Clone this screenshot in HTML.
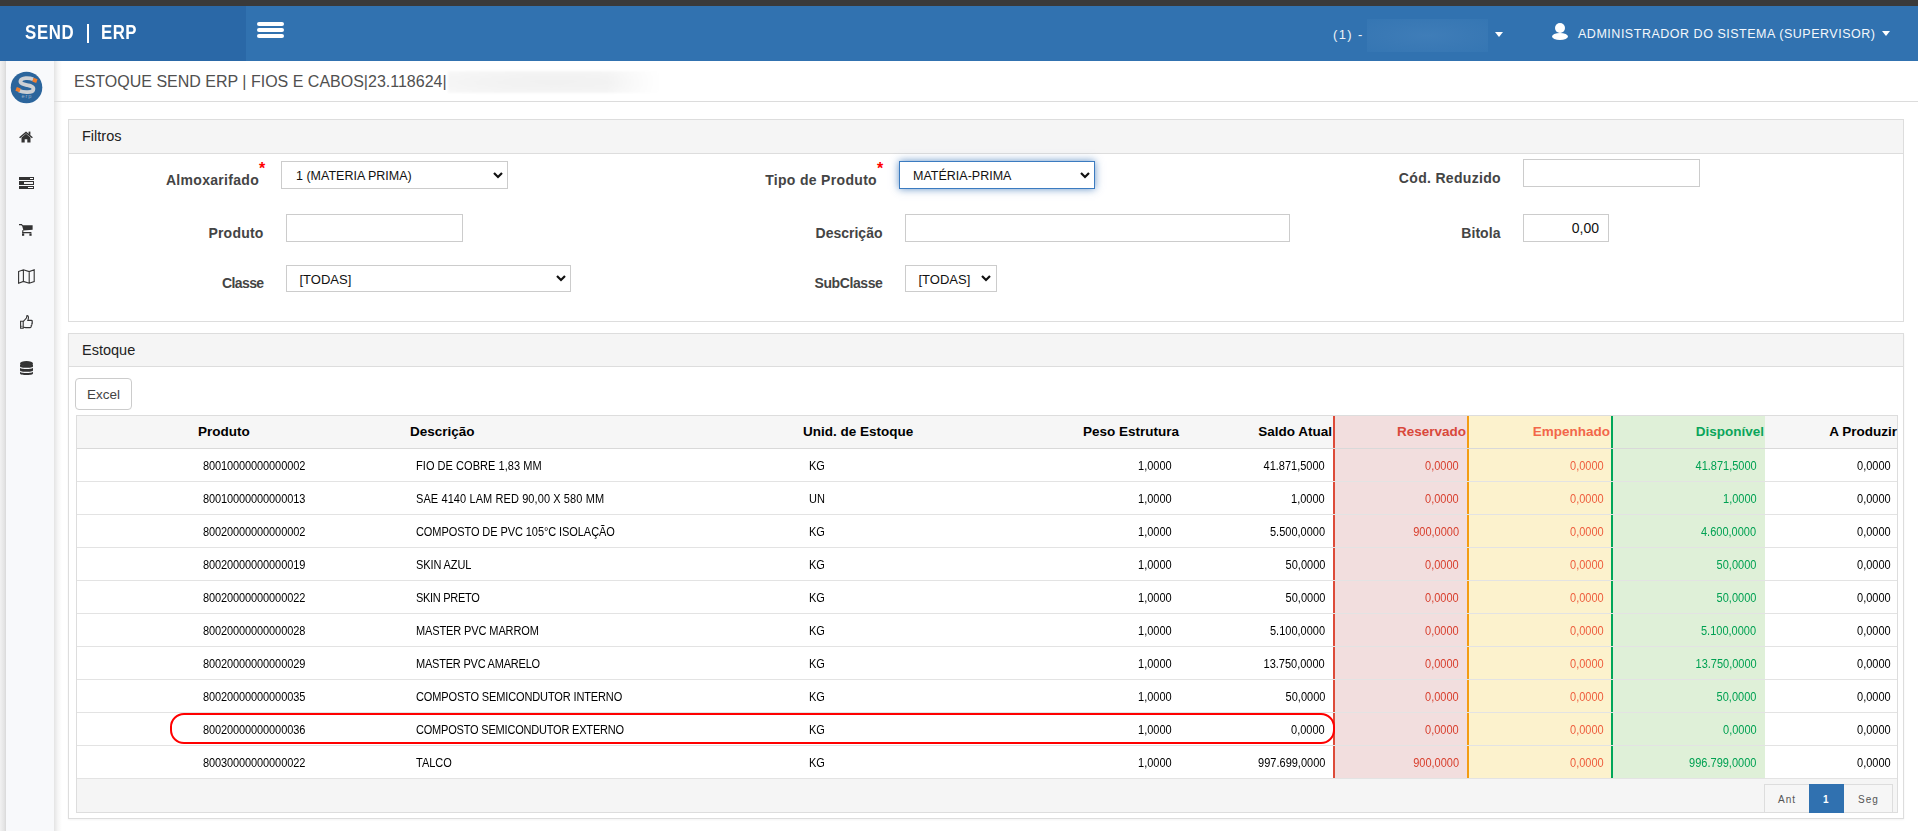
<!DOCTYPE html>
<html><head><meta charset="utf-8"><title>Estoque</title><style>
*{box-sizing:border-box;margin:0;padding:0}
html,body{width:1918px;height:831px;overflow:hidden;background:#fff;font-family:"Liberation Sans",sans-serif}
body{position:relative}
.a{position:absolute}
.t{position:absolute;white-space:nowrap;line-height:1}
svg{position:absolute;overflow:visible}
</style></head><body>
<div class="a" style="left:0px;top:0px;width:1918px;height:6px;background:#3a3a3a"></div>
<div class="a" style="left:0px;top:6px;width:1918px;height:55px;background:#3172b0"></div>
<div class="a" style="left:0px;top:6px;width:246px;height:55px;background:#2a68a7"></div>
<div class="t" style="left:25px;top:21.87px;font-size:20px;font-weight:bold;color:#fff;letter-spacing:0.8px;transform:scaleX(0.84);transform-origin:0 0">SEND</div>
<div class="a" style="left:87px;top:24px;width:2px;height:19px;background:#fff"></div>
<div class="t" style="left:101px;top:21.87px;font-size:20px;font-weight:bold;color:#fff;letter-spacing:0.6px;transform:scaleX(0.84);transform-origin:0 0">ERP</div>
<div class="a" style="left:257px;top:22px;width:27px;height:4px;background:#fff;border-radius:2px"></div>
<div class="a" style="left:257px;top:28px;width:27px;height:4px;background:#fff;border-radius:2px"></div>
<div class="a" style="left:257px;top:34px;width:27px;height:4px;background:#fff;border-radius:2px"></div>
<div class="t" style="left:1333px;top:27.60px;font-size:13px;font-weight:normal;color:#eef3f8;letter-spacing:1.4px;">(1) -</div>
<div class="a" style="left:1367px;top:19px;width:121px;height:33px;background:radial-gradient(ellipse at center,#3f7db8 0%,#3a79b5 50%,#3576b3 100%)"></div>
<svg style="left:1495px;top:32px" width="9" height="6"><path d="M0 0 L8 0 L4 5 Z" fill="#fff"/></svg>
<svg style="left:1552px;top:23px" width="17" height="17" viewBox="0 0 17 17"><circle cx="8" cy="5" r="5" fill="#fff"/><ellipse cx="8" cy="13.5" rx="8" ry="3.5" fill="#fff"/></svg>
<div class="t" style="left:1578px;top:28.02px;font-size:12.5px;font-weight:normal;color:#f4f8fc;letter-spacing:0.52px;">ADMINISTRADOR DO SISTEMA (SUPERVISOR)</div>
<svg style="left:1882px;top:31px" width="9" height="6"><path d="M0 0 L8 0 L4 5 Z" fill="#fff"/></svg>
<div class="a" style="left:0px;top:61px;width:6px;height:770px;background:linear-gradient(to right,#f2f2f2,#e4e4e4 70%,#d9d9d9)"></div>
<div class="a" style="left:6px;top:61px;width:48px;height:770px;background:#f8f9fb"></div>
<div class="a" style="left:54px;top:61px;width:8px;height:770px;background:linear-gradient(to right,#e4e4e4,#f6f6f6 50%,#fff)"></div>
<svg style="left:10px;top:71px" width="33" height="33" viewBox="0 0 33 33">
<circle cx="16.5" cy="16.5" r="15.8" fill="#2b659c"/>
<path d="M23.2 8.2 C19 6.6 11.6 6.6 10.6 9.6 C9.6 12.6 14 13.4 17.4 14.2 C21.4 15 24.2 16 23.2 19 C22.2 21.6 14 22 9 19.6" fill="none" stroke="#cdd0d4" stroke-width="3.8" stroke-linecap="butt"/>
<rect x="22.8" y="7.3" width="4.2" height="4" fill="#f07f2f" transform="rotate(20 24.9 9.3)"/>
<rect x="6" y="16.6" width="4.2" height="4" fill="#f07f2f" transform="rotate(20 8.1 18.6)"/>
<text x="17" y="27" font-size="5.6" letter-spacing="0.9" fill="#9db3c8" text-anchor="middle" font-family="Liberation Sans">erp</text>
</svg>
<svg style="left:19px;top:131px" width="14" height="12" viewBox="0 0 14 12">
<path d="M2.5 6.5 L7 2.8 L11.5 6.5 V11.5 H8.3 V8.3 H5.7 V11.5 H2.5 Z" fill="#333"/>
<path d="M0.6 6.8 L7 1.5 L13.4 6.8" fill="none" stroke="#333" stroke-width="1.4"/>
<rect x="9.6" y="0.6" width="1.8" height="3.2" fill="#333"/>
</svg>
<svg style="left:19px;top:177px" width="15" height="12" viewBox="0 0 15 12">
<rect x="0" y="0" width="15" height="3" fill="#333"/><rect x="11" y="1" width="3" height="1" fill="#fff"/>
<rect x="0" y="4" width="15" height="4" fill="#333"/><rect x="5" y="5" width="9" height="2" fill="#f4f4f4"/>
<rect x="0" y="9" width="15" height="3" fill="#333"/><rect x="9" y="10" width="5" height="1" fill="#fff"/>
</svg>
<svg style="left:19px;top:224px" width="14" height="12" viewBox="0 0 14 12">
<path d="M0 0.6 H2.6 L3.6 2 " fill="none" stroke="#333" stroke-width="1.1"/>
<path d="M3 1.2 H13.6 V5.8 L4.4 6.6 Z" fill="#333"/>
<path d="M4 6 L3.6 8.6 H12.4" fill="none" stroke="#333" stroke-width="1.1"/>
<rect x="3" y="9.4" width="2.2" height="2.4" fill="#333"/><rect x="10.4" y="9.4" width="2.2" height="2.4" fill="#333"/>
</svg>
<svg style="left:18px;top:269px" width="17" height="15" viewBox="0 0 17 15">
<path d="M0.6 2.4 L5.4 0.8 L11.2 2.6 L16.2 0.8 V12.6 L11.2 14.2 L5.4 12.4 L0.6 14.2 Z M5.4 0.8 V12.4 M11.2 2.6 V14.2" fill="none" stroke="#333" stroke-width="1.1" stroke-linejoin="miter"/>
</svg>
<svg style="left:20px;top:315px" width="13" height="14" viewBox="0 0 13 14">
<path d="M0.6 6.2 H3.2 V13.2 H0.6 Z" fill="none" stroke="#333" stroke-width="1.1"/>
<path d="M3.2 6.6 L6.4 3 L7 0.6 C8.4 0.6 8.8 2 8.2 4.2 L7.8 5.4 H11.4 C12.4 5.4 12.6 6.4 12 7 C12.6 7.6 12.4 8.6 11.8 8.8 C12.2 9.6 11.8 10.4 11.2 10.6 C11.4 11.6 11 12.6 10 12.6 H5.8 L3.2 12.2" fill="none" stroke="#333" stroke-width="1.1"/>
<rect x="1.4" y="10.8" width="1" height="1" fill="#333"/>
</svg>
<svg style="left:20px;top:361px" width="13" height="15" viewBox="0 0 13 15">
<ellipse cx="6.5" cy="2.6" rx="6.5" ry="2.6" fill="#333"/>
<path d="M0 3 V5.4 C0 7.2 13 7.2 13 5.4 V3 C13 4.8 0 4.8 0 3 Z" fill="#333"/>
<path d="M0 6.6 V9.4 C0 11.2 13 11.2 13 9.4 V6.6 C13 8.6 0 8.6 0 6.6 Z" fill="#333"/>
<path d="M0 10.6 V12.6 C0 14.6 13 14.6 13 12.6 V10.6 C13 12.6 0 12.6 0 10.6 Z" fill="#333"/>
</svg>
<div class="a" style="left:54px;top:101px;width:1864px;height:1px;background:#dcdcdc"></div>
<div class="t" style="left:74px;top:74.06px;font-size:16px;font-weight:normal;color:#505050;">ESTOQUE SEND ERP | FIOS E CABOS|23.118624|</div>
<div class="a" style="left:448px;top:71px;width:212px;height:22px;background:linear-gradient(to right,rgba(255,255,255,0) 0%,rgba(255,255,255,0) 75%,#fff 100%),radial-gradient(ellipse at center,#f1f1f1 0%,#f3f3f3 45%,#f6f6f6 80%,#f9f9f9 100%);filter:blur(1.2px)"></div>
<div class="a" style="left:68px;top:119px;width:1836px;height:203px;border:1px solid #ddd;background:#fff"></div>
<div class="a" style="left:69px;top:120px;width:1834px;height:34px;background:#f5f5f5;border-bottom:1px solid #ddd"></div>
<div class="t" style="left:82px;top:128.93px;font-size:14.5px;font-weight:normal;color:#222;">Filtros</div>
<div class="t" style="right:1659px;top:172.95px;font-size:14px;font-weight:bold;color:#444;letter-spacing:0.3px;">Almoxarifado</div>
<div class="t" style="left:259.0px;top:160.96px;font-size:16px;font-weight:bold;color:#f00;">*</div>
<div class="t" style="right:1654.5px;top:226.05px;font-size:14px;font-weight:bold;color:#444;letter-spacing:0.2px;">Produto</div>
<div class="t" style="right:1654.5px;top:275.85px;font-size:14px;font-weight:bold;color:#444;letter-spacing:-0.6px;">Classe</div>
<div class="t" style="right:1041px;top:172.85px;font-size:14px;font-weight:bold;color:#444;letter-spacing:0.32px;">Tipo de Produto</div>
<div class="t" style="left:877.0px;top:161.26px;font-size:16px;font-weight:bold;color:#f00;">*</div>
<div class="t" style="right:1035.5px;top:226.05px;font-size:14px;font-weight:bold;color:#444;">Descrição</div>
<div class="t" style="right:1035.5px;top:275.65px;font-size:14px;font-weight:bold;color:#444;letter-spacing:-0.4px;">SubClasse</div>
<div class="t" style="right:417px;top:170.85px;font-size:14px;font-weight:bold;color:#444;letter-spacing:0.32px;">Cód. Reduzido</div>
<div class="t" style="right:417.5px;top:226.25px;font-size:14px;font-weight:bold;color:#444;letter-spacing:0.05px;">Bitola</div>
<div class="a" style="left:281px;top:161px;width:227px;height:28px;border:1px solid #ccc;background:#fff;"></div>
<div class="t" style="left:296px;top:169.72px;font-size:12.5px;font-weight:normal;color:#111;">1 (MATERIA PRIMA)</div>
<svg style="left:493px;top:171.5px" width="10" height="7" viewBox="0 0 10 7"><path d="M1 1 L5 5 L9 1" fill="none" stroke="#111" stroke-width="2.2"/></svg>
<div class="a" style="left:286px;top:214px;width:177px;height:28px;border:1px solid #ccc;background:#fff;"></div>
<div class="a" style="left:286px;top:265px;width:285px;height:27px;border:1px solid #ccc;background:#fff;"></div>
<div class="t" style="left:299.5px;top:273.00px;font-size:13px;font-weight:normal;color:#111;">[TODAS]</div>
<svg style="left:556px;top:275px" width="10" height="7" viewBox="0 0 10 7"><path d="M1 1 L5 5 L9 1" fill="none" stroke="#111" stroke-width="2.2"/></svg>
<div class="a" style="left:899px;top:161px;width:196px;height:28px;border:1px solid #ccc;background:#fff;border-color:#3b7bc0;box-shadow:0 0 8px rgba(50,110,180,.75)"></div>
<div class="t" style="left:913px;top:169.72px;font-size:12.5px;font-weight:normal;color:#111;">MATÉRIA-PRIMA</div>
<svg style="left:1079.5px;top:171.5px" width="10" height="7" viewBox="0 0 10 7"><path d="M1 1 L5 5 L9 1" fill="none" stroke="#111" stroke-width="2.2"/></svg>
<div class="a" style="left:905px;top:214px;width:385px;height:28px;border:1px solid #ccc;background:#fff;"></div>
<div class="a" style="left:905px;top:265px;width:92px;height:27px;border:1px solid #ccc;background:#fff;"></div>
<div class="t" style="left:918.5px;top:273.00px;font-size:13px;font-weight:normal;color:#111;">[TODAS]</div>
<svg style="left:981px;top:275px" width="10" height="7" viewBox="0 0 10 7"><path d="M1 1 L5 5 L9 1" fill="none" stroke="#111" stroke-width="2.2"/></svg>
<div class="a" style="left:1523px;top:159px;width:177px;height:28px;border:1px solid #ccc;background:#fff;"></div>
<div class="a" style="left:1523px;top:214px;width:86px;height:28px;border:1px solid #ccc;background:#fff;"></div>
<div class="t" style="right:319px;top:221.15px;font-size:14px;font-weight:normal;color:#111;">0,00</div>
<div class="a" style="left:68px;top:333px;width:1836px;height:486px;border:1px solid #ddd;background:#fff;box-shadow:0 1px 2px rgba(0,0,0,.05)"></div>
<div class="a" style="left:69px;top:334px;width:1834px;height:33px;background:#f5f5f5;border-bottom:1px solid #ddd"></div>
<div class="t" style="left:82px;top:342.93px;font-size:14.5px;font-weight:normal;color:#222;">Estoque</div>
<div class="a" style="left:75px;top:378px;width:57px;height:32px;border:1px solid #ccc;border-radius:4px;background:#fff"></div>
<div class="t" style="left:87px;top:387.97px;font-size:13.5px;font-weight:normal;color:#444;">Excel</div>
<div class="a" style="left:76px;top:415px;width:1822px;height:398px;border:1px solid #ddd;background:#fff"></div>
<div class="a" style="left:77px;top:416px;width:1820px;height:32px;background:#f6f6f6"></div>
<div class="a" style="left:1333px;top:416px;width:134px;height:362px;background:#f2dede"></div>
<div class="a" style="left:1467px;top:416px;width:144px;height:362px;background:#fcf2cd"></div>
<div class="a" style="left:1611px;top:416px;width:154px;height:362px;background:#dff0d8"></div>
<div class="a" style="left:1333px;top:416px;width:2px;height:362px;background:#dd4b39"></div>
<div class="a" style="left:1467px;top:416px;width:2px;height:362px;background:#f39c12"></div>
<div class="a" style="left:1611px;top:416px;width:2px;height:362px;background:#00a65a"></div>
<div class="a" style="left:77px;top:448px;width:1820px;height:1px;background:#d9d9d9"></div>
<div class="a" style="left:77px;top:481px;width:1820px;height:1px;background:#e3e3e3"></div>
<div class="a" style="left:77px;top:514px;width:1820px;height:1px;background:#e3e3e3"></div>
<div class="a" style="left:77px;top:547px;width:1820px;height:1px;background:#e3e3e3"></div>
<div class="a" style="left:77px;top:580px;width:1820px;height:1px;background:#e3e3e3"></div>
<div class="a" style="left:77px;top:613px;width:1820px;height:1px;background:#e3e3e3"></div>
<div class="a" style="left:77px;top:646px;width:1820px;height:1px;background:#e3e3e3"></div>
<div class="a" style="left:77px;top:679px;width:1820px;height:1px;background:#e3e3e3"></div>
<div class="a" style="left:77px;top:712px;width:1820px;height:1px;background:#e3e3e3"></div>
<div class="a" style="left:77px;top:745px;width:1820px;height:1px;background:#e3e3e3"></div>
<div class="a" style="left:77px;top:778px;width:1820px;height:1px;background:#e3e3e3"></div>
<div class="a" style="left:77px;top:779px;width:1820px;height:33px;background:#f5f5f5"></div>
<div class="t" style="left:198px;top:424.67px;font-size:13.5px;font-weight:bold;color:#000;">Produto</div>
<div class="t" style="left:410px;top:424.67px;font-size:13.5px;font-weight:bold;color:#000;">Descrição</div>
<div class="t" style="left:803px;top:424.67px;font-size:13.5px;font-weight:bold;color:#000;">Unid. de Estoque</div>
<div class="t" style="right:739px;top:424.67px;font-size:13.5px;font-weight:bold;color:#000;">Peso Estrutura</div>
<div class="t" style="right:586px;top:424.67px;font-size:13.5px;font-weight:bold;color:#000;">Saldo Atual</div>
<div class="t" style="right:452px;top:424.67px;font-size:13.5px;font-weight:bold;color:#d9483b;">Reservado</div>
<div class="t" style="right:308px;top:424.67px;font-size:13.5px;font-weight:bold;color:#f2674a;">Empenhado</div>
<div class="t" style="right:154px;top:424.67px;font-size:13.5px;font-weight:bold;color:#0aa55b;">Disponível</div>
<div class="t" style="right:21px;top:424.67px;font-size:13.5px;font-weight:bold;color:#000;">A Produzir</div>
<div class="t" style="left:203px;top:459.74px;font-size:12px;font-weight:normal;color:#000;letter-spacing:-0.12px;transform:scaleX(0.917);transform-origin:0 0">80010000000000002</div>
<div class="t" style="left:415.5px;top:459.74px;font-size:12px;font-weight:normal;color:#000;letter-spacing:0.053px;transform:scaleX(0.917);transform-origin:0 0">FIO DE COBRE 1,83 MM</div>
<div class="t" style="left:809px;top:459.74px;font-size:12px;font-weight:normal;color:#000;transform:scaleX(0.917);transform-origin:0 0">KG</div>
<div class="t" style="right:746px;top:459.74px;font-size:12px;font-weight:normal;color:#000;transform:scaleX(0.917);transform-origin:100% 0">1,0000</div>
<div class="t" style="right:593px;top:459.74px;font-size:12px;font-weight:normal;color:#000;transform:scaleX(0.917);transform-origin:100% 0">41.871,5000</div>
<div class="t" style="right:459px;top:459.74px;font-size:12px;font-weight:normal;color:#d8402f;transform:scaleX(0.917);transform-origin:100% 0">0,0000</div>
<div class="t" style="right:314px;top:459.74px;font-size:12px;font-weight:normal;color:#ee5e3e;transform:scaleX(0.917);transform-origin:100% 0">0,0000</div>
<div class="t" style="right:161.5px;top:459.74px;font-size:12px;font-weight:normal;color:#00a152;transform:scaleX(0.917);transform-origin:100% 0">41.871,5000</div>
<div class="t" style="right:27.5px;top:459.74px;font-size:12px;font-weight:normal;color:#000;transform:scaleX(0.917);transform-origin:100% 0">0,0000</div>
<div class="t" style="left:203px;top:492.74px;font-size:12px;font-weight:normal;color:#000;letter-spacing:-0.12px;transform:scaleX(0.917);transform-origin:0 0">80010000000000013</div>
<div class="t" style="left:415.5px;top:492.74px;font-size:12px;font-weight:normal;color:#000;letter-spacing:0.1px;transform:scaleX(0.917);transform-origin:0 0">SAE 4140 LAM RED 90,00 X 580 MM</div>
<div class="t" style="left:809px;top:492.74px;font-size:12px;font-weight:normal;color:#000;transform:scaleX(0.917);transform-origin:0 0">UN</div>
<div class="t" style="right:746px;top:492.74px;font-size:12px;font-weight:normal;color:#000;transform:scaleX(0.917);transform-origin:100% 0">1,0000</div>
<div class="t" style="right:593px;top:492.74px;font-size:12px;font-weight:normal;color:#000;transform:scaleX(0.917);transform-origin:100% 0">1,0000</div>
<div class="t" style="right:459px;top:492.74px;font-size:12px;font-weight:normal;color:#d8402f;transform:scaleX(0.917);transform-origin:100% 0">0,0000</div>
<div class="t" style="right:314px;top:492.74px;font-size:12px;font-weight:normal;color:#ee5e3e;transform:scaleX(0.917);transform-origin:100% 0">0,0000</div>
<div class="t" style="right:161.5px;top:492.74px;font-size:12px;font-weight:normal;color:#00a152;transform:scaleX(0.917);transform-origin:100% 0">1,0000</div>
<div class="t" style="right:27.5px;top:492.74px;font-size:12px;font-weight:normal;color:#000;transform:scaleX(0.917);transform-origin:100% 0">0,0000</div>
<div class="t" style="left:203px;top:525.74px;font-size:12px;font-weight:normal;color:#000;letter-spacing:-0.12px;transform:scaleX(0.917);transform-origin:0 0">80020000000000002</div>
<div class="t" style="left:415.5px;top:525.74px;font-size:12px;font-weight:normal;color:#000;letter-spacing:-0.086px;transform:scaleX(0.917);transform-origin:0 0">COMPOSTO DE PVC 105°C ISOLAÇÃO</div>
<div class="t" style="left:809px;top:525.74px;font-size:12px;font-weight:normal;color:#000;transform:scaleX(0.917);transform-origin:0 0">KG</div>
<div class="t" style="right:746px;top:525.74px;font-size:12px;font-weight:normal;color:#000;transform:scaleX(0.917);transform-origin:100% 0">1,0000</div>
<div class="t" style="right:593px;top:525.74px;font-size:12px;font-weight:normal;color:#000;transform:scaleX(0.917);transform-origin:100% 0">5.500,0000</div>
<div class="t" style="right:459px;top:525.74px;font-size:12px;font-weight:normal;color:#d8402f;transform:scaleX(0.917);transform-origin:100% 0">900,0000</div>
<div class="t" style="right:314px;top:525.74px;font-size:12px;font-weight:normal;color:#ee5e3e;transform:scaleX(0.917);transform-origin:100% 0">0,0000</div>
<div class="t" style="right:161.5px;top:525.74px;font-size:12px;font-weight:normal;color:#00a152;transform:scaleX(0.917);transform-origin:100% 0">4.600,0000</div>
<div class="t" style="right:27.5px;top:525.74px;font-size:12px;font-weight:normal;color:#000;transform:scaleX(0.917);transform-origin:100% 0">0,0000</div>
<div class="t" style="left:203px;top:558.74px;font-size:12px;font-weight:normal;color:#000;letter-spacing:-0.12px;transform:scaleX(0.917);transform-origin:0 0">80020000000000019</div>
<div class="t" style="left:415.5px;top:558.74px;font-size:12px;font-weight:normal;color:#000;letter-spacing:-0.125px;transform:scaleX(0.917);transform-origin:0 0">SKIN AZUL</div>
<div class="t" style="left:809px;top:558.74px;font-size:12px;font-weight:normal;color:#000;transform:scaleX(0.917);transform-origin:0 0">KG</div>
<div class="t" style="right:746px;top:558.74px;font-size:12px;font-weight:normal;color:#000;transform:scaleX(0.917);transform-origin:100% 0">1,0000</div>
<div class="t" style="right:593px;top:558.74px;font-size:12px;font-weight:normal;color:#000;transform:scaleX(0.917);transform-origin:100% 0">50,0000</div>
<div class="t" style="right:459px;top:558.74px;font-size:12px;font-weight:normal;color:#d8402f;transform:scaleX(0.917);transform-origin:100% 0">0,0000</div>
<div class="t" style="right:314px;top:558.74px;font-size:12px;font-weight:normal;color:#ee5e3e;transform:scaleX(0.917);transform-origin:100% 0">0,0000</div>
<div class="t" style="right:161.5px;top:558.74px;font-size:12px;font-weight:normal;color:#00a152;transform:scaleX(0.917);transform-origin:100% 0">50,0000</div>
<div class="t" style="right:27.5px;top:558.74px;font-size:12px;font-weight:normal;color:#000;transform:scaleX(0.917);transform-origin:100% 0">0,0000</div>
<div class="t" style="left:203px;top:591.74px;font-size:12px;font-weight:normal;color:#000;letter-spacing:-0.12px;transform:scaleX(0.917);transform-origin:0 0">80020000000000022</div>
<div class="t" style="left:415.5px;top:591.74px;font-size:12px;font-weight:normal;color:#000;letter-spacing:-0.333px;transform:scaleX(0.917);transform-origin:0 0">SKIN PRETO</div>
<div class="t" style="left:809px;top:591.74px;font-size:12px;font-weight:normal;color:#000;transform:scaleX(0.917);transform-origin:0 0">KG</div>
<div class="t" style="right:746px;top:591.74px;font-size:12px;font-weight:normal;color:#000;transform:scaleX(0.917);transform-origin:100% 0">1,0000</div>
<div class="t" style="right:593px;top:591.74px;font-size:12px;font-weight:normal;color:#000;transform:scaleX(0.917);transform-origin:100% 0">50,0000</div>
<div class="t" style="right:459px;top:591.74px;font-size:12px;font-weight:normal;color:#d8402f;transform:scaleX(0.917);transform-origin:100% 0">0,0000</div>
<div class="t" style="right:314px;top:591.74px;font-size:12px;font-weight:normal;color:#ee5e3e;transform:scaleX(0.917);transform-origin:100% 0">0,0000</div>
<div class="t" style="right:161.5px;top:591.74px;font-size:12px;font-weight:normal;color:#00a152;transform:scaleX(0.917);transform-origin:100% 0">50,0000</div>
<div class="t" style="right:27.5px;top:591.74px;font-size:12px;font-weight:normal;color:#000;transform:scaleX(0.917);transform-origin:100% 0">0,0000</div>
<div class="t" style="left:203px;top:624.74px;font-size:12px;font-weight:normal;color:#000;letter-spacing:-0.12px;transform:scaleX(0.917);transform-origin:0 0">80020000000000028</div>
<div class="t" style="left:415.5px;top:624.74px;font-size:12px;font-weight:normal;color:#000;letter-spacing:-0.125px;transform:scaleX(0.917);transform-origin:0 0">MASTER PVC MARROM</div>
<div class="t" style="left:809px;top:624.74px;font-size:12px;font-weight:normal;color:#000;transform:scaleX(0.917);transform-origin:0 0">KG</div>
<div class="t" style="right:746px;top:624.74px;font-size:12px;font-weight:normal;color:#000;transform:scaleX(0.917);transform-origin:100% 0">1,0000</div>
<div class="t" style="right:593px;top:624.74px;font-size:12px;font-weight:normal;color:#000;transform:scaleX(0.917);transform-origin:100% 0">5.100,0000</div>
<div class="t" style="right:459px;top:624.74px;font-size:12px;font-weight:normal;color:#d8402f;transform:scaleX(0.917);transform-origin:100% 0">0,0000</div>
<div class="t" style="right:314px;top:624.74px;font-size:12px;font-weight:normal;color:#ee5e3e;transform:scaleX(0.917);transform-origin:100% 0">0,0000</div>
<div class="t" style="right:161.5px;top:624.74px;font-size:12px;font-weight:normal;color:#00a152;transform:scaleX(0.917);transform-origin:100% 0">5.100,0000</div>
<div class="t" style="right:27.5px;top:624.74px;font-size:12px;font-weight:normal;color:#000;transform:scaleX(0.917);transform-origin:100% 0">0,0000</div>
<div class="t" style="left:203px;top:657.74px;font-size:12px;font-weight:normal;color:#000;letter-spacing:-0.12px;transform:scaleX(0.917);transform-origin:0 0">80020000000000029</div>
<div class="t" style="left:415.5px;top:657.74px;font-size:12px;font-weight:normal;color:#000;letter-spacing:-0.235px;transform:scaleX(0.917);transform-origin:0 0">MASTER PVC AMARELO</div>
<div class="t" style="left:809px;top:657.74px;font-size:12px;font-weight:normal;color:#000;transform:scaleX(0.917);transform-origin:0 0">KG</div>
<div class="t" style="right:746px;top:657.74px;font-size:12px;font-weight:normal;color:#000;transform:scaleX(0.917);transform-origin:100% 0">1,0000</div>
<div class="t" style="right:593px;top:657.74px;font-size:12px;font-weight:normal;color:#000;transform:scaleX(0.917);transform-origin:100% 0">13.750,0000</div>
<div class="t" style="right:459px;top:657.74px;font-size:12px;font-weight:normal;color:#d8402f;transform:scaleX(0.917);transform-origin:100% 0">0,0000</div>
<div class="t" style="right:314px;top:657.74px;font-size:12px;font-weight:normal;color:#ee5e3e;transform:scaleX(0.917);transform-origin:100% 0">0,0000</div>
<div class="t" style="right:161.5px;top:657.74px;font-size:12px;font-weight:normal;color:#00a152;transform:scaleX(0.917);transform-origin:100% 0">13.750,0000</div>
<div class="t" style="right:27.5px;top:657.74px;font-size:12px;font-weight:normal;color:#000;transform:scaleX(0.917);transform-origin:100% 0">0,0000</div>
<div class="t" style="left:203px;top:690.74px;font-size:12px;font-weight:normal;color:#000;letter-spacing:-0.12px;transform:scaleX(0.917);transform-origin:0 0">80020000000000035</div>
<div class="t" style="left:415.5px;top:690.74px;font-size:12px;font-weight:normal;color:#000;letter-spacing:-0.143px;transform:scaleX(0.917);transform-origin:0 0">COMPOSTO SEMICONDUTOR INTERNO</div>
<div class="t" style="left:809px;top:690.74px;font-size:12px;font-weight:normal;color:#000;transform:scaleX(0.917);transform-origin:0 0">KG</div>
<div class="t" style="right:746px;top:690.74px;font-size:12px;font-weight:normal;color:#000;transform:scaleX(0.917);transform-origin:100% 0">1,0000</div>
<div class="t" style="right:593px;top:690.74px;font-size:12px;font-weight:normal;color:#000;transform:scaleX(0.917);transform-origin:100% 0">50,0000</div>
<div class="t" style="right:459px;top:690.74px;font-size:12px;font-weight:normal;color:#d8402f;transform:scaleX(0.917);transform-origin:100% 0">0,0000</div>
<div class="t" style="right:314px;top:690.74px;font-size:12px;font-weight:normal;color:#ee5e3e;transform:scaleX(0.917);transform-origin:100% 0">0,0000</div>
<div class="t" style="right:161.5px;top:690.74px;font-size:12px;font-weight:normal;color:#00a152;transform:scaleX(0.917);transform-origin:100% 0">50,0000</div>
<div class="t" style="right:27.5px;top:690.74px;font-size:12px;font-weight:normal;color:#000;transform:scaleX(0.917);transform-origin:100% 0">0,0000</div>
<div class="t" style="left:203px;top:723.74px;font-size:12px;font-weight:normal;color:#000;letter-spacing:-0.12px;transform:scaleX(0.917);transform-origin:0 0">80020000000000036</div>
<div class="t" style="left:415.5px;top:723.74px;font-size:12px;font-weight:normal;color:#000;letter-spacing:-0.214px;transform:scaleX(0.917);transform-origin:0 0">COMPOSTO SEMICONDUTOR EXTERNO</div>
<div class="t" style="left:809px;top:723.74px;font-size:12px;font-weight:normal;color:#000;transform:scaleX(0.917);transform-origin:0 0">KG</div>
<div class="t" style="right:746px;top:723.74px;font-size:12px;font-weight:normal;color:#000;transform:scaleX(0.917);transform-origin:100% 0">1,0000</div>
<div class="t" style="right:593px;top:723.74px;font-size:12px;font-weight:normal;color:#000;transform:scaleX(0.917);transform-origin:100% 0">0,0000</div>
<div class="t" style="right:459px;top:723.74px;font-size:12px;font-weight:normal;color:#d8402f;transform:scaleX(0.917);transform-origin:100% 0">0,0000</div>
<div class="t" style="right:314px;top:723.74px;font-size:12px;font-weight:normal;color:#ee5e3e;transform:scaleX(0.917);transform-origin:100% 0">0,0000</div>
<div class="t" style="right:161.5px;top:723.74px;font-size:12px;font-weight:normal;color:#00a152;transform:scaleX(0.917);transform-origin:100% 0">0,0000</div>
<div class="t" style="right:27.5px;top:723.74px;font-size:12px;font-weight:normal;color:#000;transform:scaleX(0.917);transform-origin:100% 0">0,0000</div>
<div class="t" style="left:203px;top:756.74px;font-size:12px;font-weight:normal;color:#000;letter-spacing:-0.12px;transform:scaleX(0.917);transform-origin:0 0">80030000000000022</div>
<div class="t" style="left:415.5px;top:756.74px;font-size:12px;font-weight:normal;color:#000;transform:scaleX(0.917);transform-origin:0 0">TALCO</div>
<div class="t" style="left:809px;top:756.74px;font-size:12px;font-weight:normal;color:#000;transform:scaleX(0.917);transform-origin:0 0">KG</div>
<div class="t" style="right:746px;top:756.74px;font-size:12px;font-weight:normal;color:#000;transform:scaleX(0.917);transform-origin:100% 0">1,0000</div>
<div class="t" style="right:593px;top:756.74px;font-size:12px;font-weight:normal;color:#000;transform:scaleX(0.917);transform-origin:100% 0">997.699,0000</div>
<div class="t" style="right:459px;top:756.74px;font-size:12px;font-weight:normal;color:#d8402f;transform:scaleX(0.917);transform-origin:100% 0">900,0000</div>
<div class="t" style="right:314px;top:756.74px;font-size:12px;font-weight:normal;color:#ee5e3e;transform:scaleX(0.917);transform-origin:100% 0">0,0000</div>
<div class="t" style="right:161.5px;top:756.74px;font-size:12px;font-weight:normal;color:#00a152;transform:scaleX(0.917);transform-origin:100% 0">996.799,0000</div>
<div class="t" style="right:27.5px;top:756.74px;font-size:12px;font-weight:normal;color:#000;transform:scaleX(0.917);transform-origin:100% 0">0,0000</div>
<div class="a" style="left:170px;top:713px;width:1165px;height:31px;border:2px solid #f00;border-radius:14px"></div>
<div class="a" style="left:1764px;top:784px;width:129px;height:29px;border:1px solid #ddd;background:#f6f6f6"></div>
<div class="a" style="left:1809px;top:784px;width:35px;height:29px;background:#3071b0"></div>
<div class="t" style="left:1778px;top:794.53px;font-size:10px;font-weight:normal;color:#555;letter-spacing:1px;">Ant</div>
<div class="t" style="left:1823px;top:794.53px;font-size:10px;font-weight:bold;color:#fff;">1</div>
<div class="t" style="left:1858px;top:794.53px;font-size:10px;font-weight:normal;color:#555;letter-spacing:1px;">Seg</div>
</body></html>
